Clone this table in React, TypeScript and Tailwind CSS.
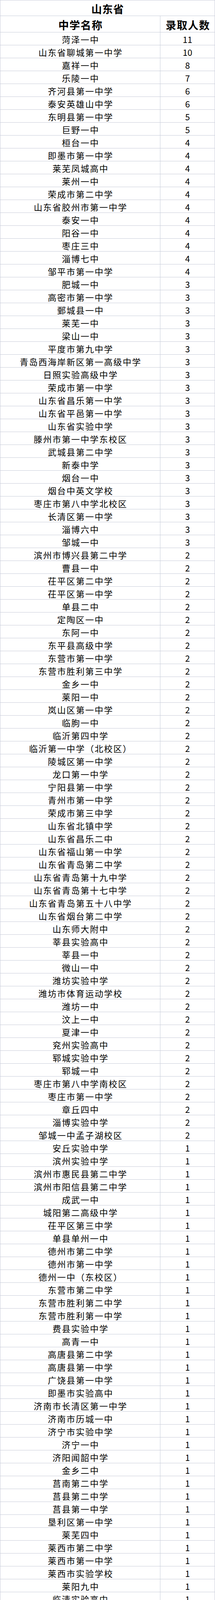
import React from "react";

const RAW = `菏泽一中|11
山东省聊城第一中学|10
嘉祥一中|8
乐陵一中|7
齐河县第一中学|6
泰安英雄山中学|6
东明县第一中学|5
巨野一中|5
桓台一中|4
即墨市第一中学|4
莱芜凤城高中|4
莱州一中|4
荣成市第二中学|4
山东省胶州市第一中学|4
泰安一中|4
阳谷一中|4
枣庄三中|4
淄博七中|4
邹平市第一中学|4
肥城一中|3
高密市第一中学|3
鄄城县一中|3
莱芜一中|3
梁山一中|3
平度市第九中学|3
青岛西海岸新区第一高级中学|3
日照实验高级中学|3
荣成市第一中学|3
山东省昌乐第一中学|3
山东省平邑第一中学|3
山东省实验中学|3
滕州市第一中学东校区|3
武城县第二中学|3
新泰中学|3
烟台一中|3
烟台中英文学校|3
枣庄市第八中学北校区|3
长清区第一中学|3
淄博六中|3
邹城一中|3
滨州市博兴县第二中学|2
曹县一中|2
茌平区第二中学|2
茌平区第一中学|2
单县二中|2
定陶区一中|2
东阿一中|2
东平县高级中学|2
东营市第一中学|2
东营市胜利第三中学|2
金乡一中|2
莱阳一中|2
岚山区第一中学|2
临朐一中|2
临沂第四中学|2
临沂第一中学（北校区）|2
陵城区第一中学|2
龙口第一中学|2
宁阳县第一中学|2
青州市第一中学|2
荣成市第三中学|2
山东省北镇中学|2
山东省昌乐二中|2
山东省福山第一中学|2
山东省青岛第二中学|2
山东省青岛第十九中学|2
山东省青岛第十七中学|2
山东省青岛第五十八中学|2
山东省烟台第二中学|2
山东师大附中|2
莘县实验高中|2
莘县一中|2
微山一中|2
潍坊实验中学|2
潍坊市体育运动学校|2
潍坊一中|2
汶上一中|2
夏津一中|2
兖州实验高中|2
郓城实验中学|2
郓城一中|2
枣庄市第八中学南校区|2
枣庄市第一中学|2
章丘四中|2
淄博实验中学|2
邹城一中孟子湖校区|2
安丘实验中学|1
滨州实验中学|1
滨州市惠民县第二中学|1
滨州市阳信县第二中学|1
成武一中|1
城阳第二高级中学|1
茌平区第三中学|1
单县单州一中|1
德州市第二中学|1
德州市第一中学|1
德州一中（东校区）|1
东营市第二中学|1
东营市胜利第二中学|1
东营市胜利第一中学|1
费县实验中学|1
高青一中|1
高唐县第二中学|1
高唐县第一中学|1
广饶县第一中学|1
即墨市实验高中|1
济南市长清区第一中学|1
济南市历城一中|1
济宁市实验中学|1
济宁一中|1
济阳闻韶中学|1
金乡二中|1
莒南第二中学|1
莒县第二中学|1
莒县第一中学|1
垦利区第一中学|1
莱芜四中|1
莱西市第二中学|1
莱西市第一中学|1
莱西市实验学校|1
莱阳九中|1
临清实验高中|1
临朐六中|1
临朐实验中学|1
临朐五中|1
临沂第十八中学|1
临沂第十九中学|1
临邑第一中学|1
牟平一中|1
蓬莱二中|1
蓬莱一中|1
平度经济开发区高级中学|1
平阴县第一中学|1
平原一中|1
青岛市体育运动学校|1
青岛西海岸新区胶南第一高级中学|1
青岛西海岸新区实验高级中学|1
青岛西海岸新区致远中学|1
曲阜师大附中|1
曲阜一中|1
日照第一中学|1
乳山银滩中学|1
山大附中实验学校|1
山东聊城第二中学|1
山东省昌乐及第中学|1
山东省莒南第一中学|1
山东省聊城第三中学|1
山东省平度第一中学|1
山东省青岛第九中学|1
山东省青岛第六十六中学|1
山东省青岛第十五中学|1
山东省青岛第一中学|1
山东省新泰市第一中学|1
山东省牟平第一中学|1
山东省诸城第一中学|1
山东枣庄东方国际学校|1
寿光圣都中学|1
寿光现代中学|1
泗水一中|1
泰安二中|1
郯城第二中学|1
郯城第一中学|1
威海一中|1
潍坊(上海)新纪元学校|1
潍坊滨海国际学校|1
潍坊中学|1
文登新一中|1
五莲县第一中学|1
新泰第一中学北校区|1
烟台格迈纳尔中学|1
烟台开发区高级中学|1
烟台三中|1
烟台四中|1
兖州一中|1
沂水县第三中学|1
沂水县第一中学|1
鱼台一中|1
郓城二中|1
枣庄二中|1
枣庄市第八中学东校区|1
章丘高级中学|1
招远市第二中学|1
招远市第一中学|1
诸城繁华中学|1
诸城市龙城中学|1
诸城市实验中学|1
淄博第四中学|1
淄博市第五中学|1
淄博淄川中学（原淄川第一中学）|1
邹城二中|1
邹城实验中学|1`;

const ROWS = RAW.split("\n").map((l) => {
  const [name, count] = l.split("|");
  return { name, count };
});

export default function App() {
  return (
    <div
      className="w-[551px] bg-white text-black"
      style={{ fontFamily: '"Noto Sans CJK SC", "Noto Sans", sans-serif' }}
    >
      <div className="border-t border-x border-[#c8ccd9]">
        <div className="h-[40px] border-b border-[#c8ccd9] flex items-center justify-center">
          <span className="text-[27px] font-bold leading-none tracking-[1px] pl-[1px] pt-[3px]">山东省</span>
        </div>
        <div className="h-[42px] border-b border-[#c8ccd9] flex">
          <div className="w-[410px] border-r border-[#c8ccd9] flex items-center justify-center">
            <span className="text-[27px] font-bold leading-none tracking-[1.5px] pl-[2px] pt-[3px]">中学名称</span>
          </div>
          <div className="flex-1 flex items-center justify-center">
            <span className="text-[27px] font-bold leading-none tracking-[1.5px] pl-[2px] pt-[3px]">录取人数</span>
          </div>
        </div>
        {ROWS.map((r, i) => (
          <div key={i} className="h-[33px] border-b border-[#c8ccd9] flex">
            <div className="w-[410px] border-r border-[#c8ccd9] flex items-center justify-center">
              <span className="text-[22px] leading-none tracking-[2px] pl-[2px] pt-[2px] whitespace-nowrap">
                {r.name}
              </span>
            </div>
            <div className="flex-1 flex items-center justify-center">
              <span className="text-[22px] leading-none pt-[2px]">{r.count}</span>
            </div>
          </div>
        ))}
      </div>
    </div>
  );
}
